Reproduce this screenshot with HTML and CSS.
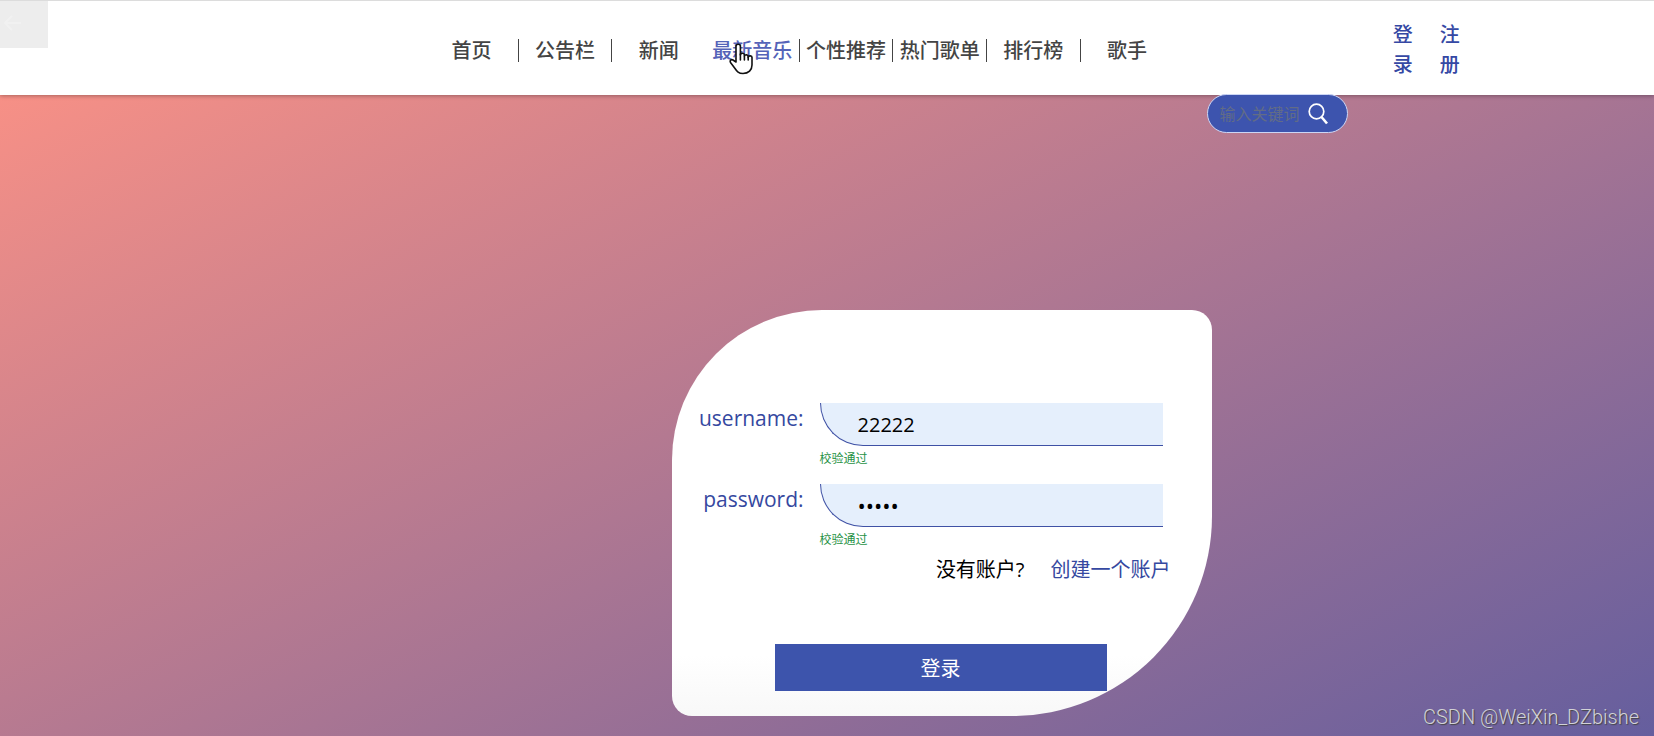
FILE: index.html
```html
<!DOCTYPE html>
<html lang="zh-cn">

<head>
  <meta charset="utf-8" />
  <meta name="viewport" content="width=device-width,initial-scale=1.0" />
  <title>登录</title>
  <link rel="stylesheet" href="styles.css">
</head>

<body>
  <header class="header">
    <button class="back" type="button" aria-label="返回">
      <svg width="18" height="16" viewBox="0 0 18 16" fill="none" stroke="#f1f1f1" stroke-width="2">
        <path d="M18 8H2M9 1L2 8l7 7" />
      </svg>
    </button>
    <nav class="nav">
      <a href="#">首页</a>
      <a href="#">公告栏</a>
      <a href="#">新闻</a>
      <a href="#" class="active">最新音乐
        <svg class="pointer" width="24" height="32" viewBox="0 0 24 32" fill="#fff" stroke="#111" stroke-width="1.6" stroke-linejoin="round" stroke-linecap="round">
          <path d="M7 19V3.500a2.200 2.200 0 0 1 4.400 0V12a2 2 0 0 1 4 .5V13a2 2 0 0 1 3.800.5V14.500a1.900 1.900 0 0 1 3.800.5v7c0 5-3.500 8.500-9 8.500-4.500 0-6-2-8-5L1.500 19.500c-1-2 .8-3.500 2.500-2.500z" />
          <path d="M11.400 11v6M15.400 13v4M19.200 14v3" fill="none" />
        </svg>
      </a>
      <a href="#">个性推荐</a>
      <a href="#">热门歌单</a>
      <a href="#">排行榜</a>
      <a href="#">歌手</a>
    </nav>
    <div class="auth">
      <a href="#">登录</a>
      <a href="#">注册</a>
    </div>
  </header>

  <main class="main">
    <form class="search">
      <input type="text" placeholder="输入关键词" aria-label="输入关键词">
      <button type="submit" aria-label="搜索">
        <svg width="20" height="22" viewBox="0 0 20 22" fill="none" stroke="#fff">
          <circle cx="8.500" cy="8.500" r="7.300" stroke-width="1.700" />
          <path d="M13.500 14l5.500 6.500" stroke-width="2.600" />
        </svg>
      </button>
    </form>

    <form class="card">
      <div class="row">
        <label for="username">username:</label>
        <div class="field">
          <input id="username" type="text" value="22222">
          <p class="tip">校验通过</p>
        </div>
      </div>
      <div class="row">
        <label for="password">password:</label>
        <div class="field">
          <input id="password" type="password" value="22222">
          <p class="tip">校验通过</p>
        </div>
      </div>
      <div class="register">
        <span>没有账户?</span>
        <a href="#">创建一个账户</a>
      </div>
      <button class="submit" type="submit">登录</button>
    </form>
  </main>

  <div class="watermark">CSDN @WeiXin_DZbishe</div>
</body>

</html>
```
FILE: styles.css
```css
* {
  box-sizing: border-box;
}

body {
  margin: 0;
  min-height: 100vh;
  display: flex;
  flex-direction: column;
  font-family: "Open Sans", "Noto Sans CJK SC", sans-serif;
  font-size: 20px;
}

a {
  text-decoration: none;
}

input,
button {
  font-family: inherit;
  border: none;
  outline: none;
}

/* 头部 */
.header {
  position: relative;
  z-index: 1;
  display: flex;
  align-items: center;
  height: 95px;
  border-top: 1px solid #dcdcdc;
  background: #fff;
  box-shadow: 0 1px 4px rgba(0, 0, 0, .3);
}

.back {
  position: absolute;
  left: 0;
  top: 0;
  width: 48px;
  height: 47px;
  padding: 0 3px;
  background: #ededed;
  text-align: left;
}

.nav {
  display: flex;
  width: 45.3%;
  margin-left: 25.7%;
  margin-top: 4px;
}

.nav a {
  position: relative;
  flex: 1;
  border-right: 1px solid #444;
  color: #444;
  font-weight: 500;
  line-height: 23px;
  text-align: center;
  white-space: nowrap;
}

.nav a:nth-child(3),
.nav a:last-child {
  border-right-color: transparent;
}

.nav .active {
  color: #5563b8;
}

.pointer {
  position: absolute;
  left: 23px;
  top: 4px;
}

.auth {
  display: flex;
  gap: 27px;
  margin-left: 13.2%;
  margin-top: 4px;
}

.auth a {
  width: 20px;
  color: #3548a4;
  font-weight: 500;
  line-height: 30px;
}

/* 内容 */
.main {
  flex: 1;
  padding-bottom: 20px;
  background: linear-gradient(154deg, #f79086, #655e9e);
}

.search {
  position: relative;
  z-index: 2;
  display: flex;
  align-items: center;
  width: 141px;
  height: 39px;
  margin-top: -1px;
  margin-left: 73%;
  padding-left: 11px;
  border: 1px solid #ccd6f5;
  border-radius: 20px;
  background: #3d54ae;
}

.search input {
  width: 89px;
  padding: 0;
  background: transparent;
  color: #fff;
  font-size: 16px;
}

.search input::placeholder {
  color: #626c86;
}

.search button {
  display: flex;
  padding: 0;
  background: transparent;
}

.card {
  width: 540px;
  height: 406px;
  margin-top: 177px;
  margin-left: 40.6%;
  padding: 93px 49px 0 0;
  border-radius: 150px 20px 200px 20px;
  background: linear-gradient(#fff 85%, #f8f8f8);
}

.row {
  display: flex;
  height: 81px;
}

.row label {
  width: 148px;
  padding-right: 16px;
  color: #3548a0;
  font-size: 21px;
  line-height: 30px;
  text-align: right;
}

.field {
  flex: 1;
}

.field input {
  display: block;
  width: 100%;
  height: 43px;
  padding: 0 0 0 37px;
  border-left: 1px solid #3f51a5;
  border-bottom: 1px solid #3f51a5;
  border-bottom-left-radius: 43px;
  background: #e5effc;
  color: #000;
  font-size: 20px;
}

.field input[type=password] {
  font-size: 22px;
}

.tip {
  margin: 4px 0 0;
  color: #1f9245;
  font-size: 12px;
  line-height: 18px;
}

.register {
  display: flex;
  justify-content: flex-end;
  gap: 26px;
  margin-right: -8px;
  line-height: 30px;
  margin-top: -10px;
}

.register a {
  color: #3548a0;
}

.submit {
  display: block;
  width: 332px;
  height: 47px;
  margin: 59px 0 0 103px;
  background: #3d54ac;
  color: #fff;
  font-size: 20px;
}

.watermark {
  position: absolute;
  right: 15px;
  bottom: 6px;
  color: #d2d2d6;
  font-family: Roboto, sans-serif;
  font-size: 20px;
  font-weight: 300;
  line-height: 26px;
  text-shadow: 1px 1px 1px #444;
}
```
